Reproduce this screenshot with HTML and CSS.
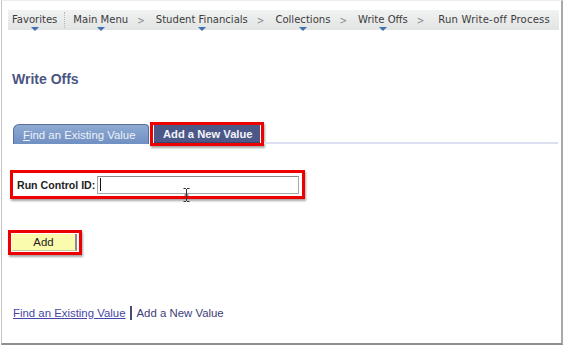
FILE: index.html
```html
<!DOCTYPE html>
<html>
<head>
<meta charset="utf-8">
<link rel="stylesheet" href="styles.css">
</head>
<body>
<div class="frame">
  <nav class="nav">
    <span class="item drop">Favorites</span>
    <span class="sep"></span>
    <span class="item drop">Main Menu</span>
    <span class="chev">&gt;</span>
    <span class="item drop">Student Financials</span>
    <span class="chev">&gt;</span>
    <span class="item drop">Collections</span>
    <span class="chev">&gt;</span>
    <span class="item drop">Write Offs</span>
    <span class="chev">&gt;</span>
    <span class="item last">Run Write-off Process</span>
  </nav>

  <h1 class="title">Write Offs</h1>

  <div class="tabs">
    <div class="tab tab-off"><u>F</u>ind an Existing Value</div>
    <div class="hl hl-tab"><div class="tab tab-on">Add a New Value</div></div>
    <div class="tabline"></div>
  </div>

  <div class="hl hl-field">
    <label class="lbl">Run Control ID:</label>
    <div class="input"><span class="caret"></span></div>
    <svg class="ibeam" width="7" height="14" viewBox="0 0 7 14"><path d="M0.5 0.5h2.5M4 0.5h2.5M3.5 1v12M0.5 13.5h2.5M4 13.5h2.5M1.5 7h4" stroke="#333" stroke-width="1" fill="none"/></svg>
  </div>

  <div class="hl hl-btn"><div class="btn">Add</div></div>

  <div class="links">
    <a class="lnk">Find an Existing Value</a>
    <span class="bar"></span>
    <span class="cur">Add a New Value</span>
  </div>
</div>
</body>
</html>
```

FILE: styles.css
```css
html, body { margin: 0; padding: 0; background: #fff; }
.frame {
  position: relative;
  margin-left: 1px;
  width: 559px;
  height: 342px;
  border-left: 1px solid #c4c4c4;
  border-right: 2px solid #a8a8a8;
  border-bottom: 2px solid #8e8e8e;
  border-top: 1px solid #ececec;
  box-sizing: content-box;
  font-family: "Liberation Sans", Arial, sans-serif;
  display: flex;
  flex-direction: column;
}
.nav {
  margin: 9px 2px 0 6px;
  height: 20px;
  background: linear-gradient(#f1f2f2, #e2e3e3);
  display: flex;
  align-items: center;
  font-family: "DejaVu Sans Condensed", "DejaVu Sans", sans-serif;
  font-size: 11.2px;
  color: #3c3c3c;
  padding-left: 4px;
  white-space: nowrap;
}
.item { position: relative; line-height: 20px; }
.last { letter-spacing: 0.2px; margin-left: 3px; }
.drop::after {
  content: "";
  position: absolute;
  left: 50%;
  bottom: -1px;
  margin-left: -4px;
  border-left: 4px solid transparent;
  border-right: 4px solid transparent;
  border-top: 4px solid #3f70b4;
}
.sep {
  width: 0;
  height: 16px;
  border-left: 1px dotted #b8b8b8;
  margin: 0 8px 0 7px;
}
.chev { color: #8a8a8a; font-size: 10px; margin: 0 11px 0 9px; }
.title {
  margin: 41px 0 0 10px;
  font-size: 14px;
  font-weight: bold;
  color: #4b5682;
  line-height: 16px;
}
.tabs {
  margin: 35px 0 0 11px;
  display: flex;
  align-items: flex-end;
  height: 24px;
}
.tab {
  font-size: 11.4px;
  box-sizing: border-box;
}
.tab-off {
  width: 136px;
  height: 20px;
  line-height: 20px;
  padding-left: 9px;
  background: linear-gradient(#8eaad4, #7090c2);
  color: #eef1f8;
  border: 1px solid #5a6f9a;
  border-bottom: none;
  border-radius: 6px 4px 0 0;
  margin-bottom: 2px;
}
.tab-off u { text-decoration: underline; }
.hl {
  border: 3px solid #ee0000;
  box-shadow: 1px 2px 2px rgba(0,0,0,0.35);
  box-sizing: border-box;
}
.hl-tab {
  margin-left: 1px;
  width: 114px;
  height: 24px;
  padding: 0;
}
.tab-on {
  background: #4b5888;
  color: #f4f5fa;
  font-weight: bold;
  font-size: 11.2px;
  height: 18px;
  line-height: 18px;
  padding-left: 9px;
  margin: 0 1px;
  border-bottom: 1px solid #3a4470;
}
.tabline {
  flex: 1;
  height: 2px;
  background: #dde0f2;
  margin-bottom: 2px;
  margin-right: 3px;
}
.hl-field {
  position: relative;
  margin: 24px 0 0 8px;
  width: 295px;
  height: 29px;
  display: flex;
  align-items: center;
  padding-left: 4px;
  white-space: nowrap;
}
.lbl {
  font-size: 10.6px;
  font-weight: bold;
  color: #1e1e1e;
}
.input {
  margin-left: 2px;
  flex: 1;
  margin-right: 3px;
  height: 18px;
  border: 1px solid #a8a8a8;
  border-top-color: #8a8a8a;
  box-sizing: border-box;
  background: #fff;
  display: flex;
  align-items: center;
  padding-left: 2px;
}
.caret { width: 1px; height: 13px; background: #111; }
.ibeam { position: absolute; left: 170px; top: 15px; }
.hl-btn {
  margin: 31px 0 0 6px;
  width: 74px;
  height: 25px;
  padding: 1px 0 0 1px;
}
.btn {
  width: 65px;
  height: 17px;
  box-sizing: border-box;
  background: #fbfbae;
  border-right: 2px solid #8c8c8c;
  border-bottom: 1px solid #c8c8a0;
  font-size: 11.4px;
  line-height: 16px;
  text-align: center;
  color: #222;
}
.links {
  margin: 50px 0 0 11px;
  display: flex;
  align-items: center;
  font-size: 11.4px;
  line-height: 16px;
}
.lnk { color: #4646a6; text-decoration: underline; }
.bar { width: 2px; height: 14px; background: #4a4a6a; margin: 0 5px 0 4px; }
.cur { color: #3d3d78; }
```
